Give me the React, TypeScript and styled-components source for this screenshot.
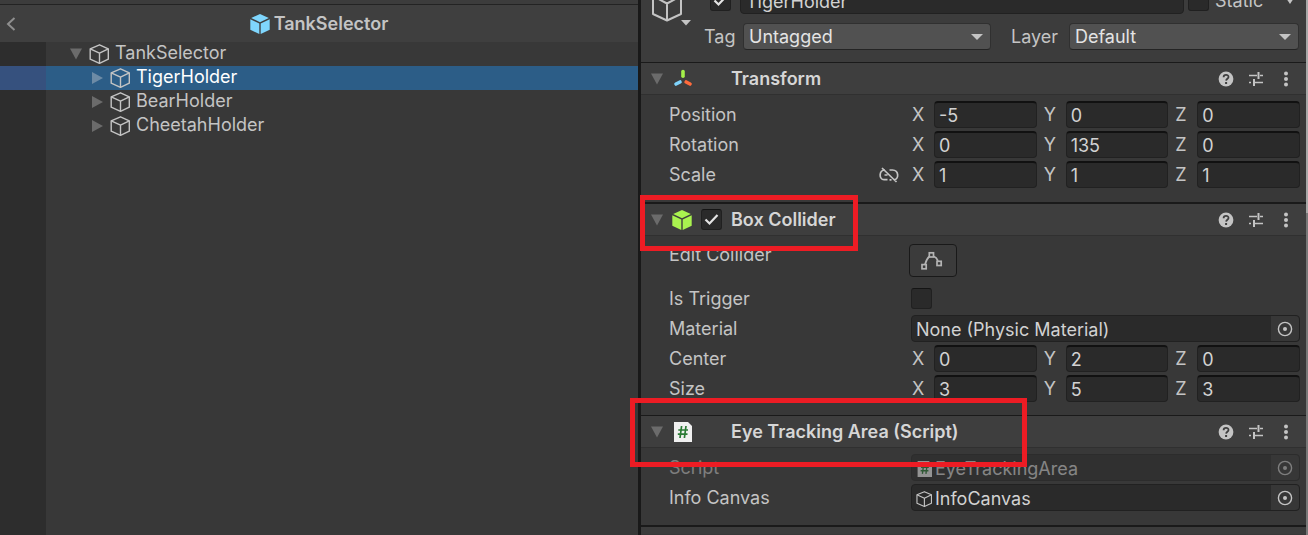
import React, { useState } from 'react';
import styled, { createGlobalStyle } from 'styled-components';

const GlobalStyle = createGlobalStyle`
  *, *::before, *::after { box-sizing: border-box; }
  html { background: #383838; }
  body {
    margin: 0;
    overflow: hidden;
    background: #383838;
    color: #c4c4c4;
    font-family: Inter, "Liberation Sans", sans-serif;
    font-size: 18px;
    line-height: 24px;
  }
  input, select, button { font: inherit; color: inherit; }
  ul { list-style: none; margin: 0; padding: 0; }
  h1, h2 { margin: 0; font-size: 18px; line-height: 24px; font-weight: 600; }
  svg { display: block; flex: none; }
`;

const Editor = styled.div`
  display: grid;
  grid-template-columns: minmax(0, 638fr) minmax(0, 668fr) 2px;
  min-height: 100vh;
`;

const WindowEdge = styled.div`
  background: linear-gradient(to bottom, #a8a8a8 213px, #787878 213px);
`;

/* Hierarchy */

const Hierarchy = styled.nav`
  display: flex;
  flex-direction: column;
  border-top: 4px solid #3c3c3c;
`;

const PrefabBar = styled.header`
  display: grid;
  grid-template-columns: 46px 1fr 46px;
  align-items: center;
  height: 38px;
  border-top: 1px solid #232323;
  background: #3f3f3f;
`;

const PlainButton = styled.button`
  display: flex;
  align-items: center;
  justify-content: center;
  padding: 0;
  border: 0;
  background: none;
`;

const BackButton = styled(PlainButton)`
  width: 22px;
  height: 24px;
`;

const PrefabTitle = styled.h1`
  display: flex;
  align-items: center;
  justify-content: center;
  gap: 4px;
`;

const TreeArea = styled.div`
  flex: 1;
  background: linear-gradient(to right, #2d2d2d 46px, #383838 46px);
`;

const TreeRow = styled.button<{ $depth: number; $selected?: boolean }>`
  display: flex;
  align-items: center;
  width: 100%;
  height: 24px;
  padding: 0 0 0 ${p => 70 + p.$depth * 21}px;
  border: 0;
  text-align: left;
  color: ${p => (p.$selected ? '#ffffff' : '#c4c4c4')};
  background: ${p => (p.$selected ? 'linear-gradient(to right, #36517e 46px, #2c5d87 46px)' : 'none')};
`;

const TreeCube = styled.span`
  padding: 0 6px 0 7px;
`;

const TreeLabel = styled.span`
  padding-bottom: 2px;
`;

/* Inspector */

const Inspector = styled.main`
  border-left: 3px solid #191919;
  background: #383838;
`;

const ObjectHeader = styled.header`
  display: grid;
  grid-template-columns: 50px 1fr;
  column-gap: 9px;
  height: 75px;
  margin-top: -13px;
  padding: 0 7px 0 10px;
  background: #3c3c3c;
`;

const ObjectIcon = styled(PlainButton)`
  align-items: flex-end;
  justify-content: flex-start;
  height: 39px;
`;

const ObjectRows = styled.div`
  display: flex;
  flex-direction: column;
  gap: 9px;
`;

const ObjectRow = styled.div`
  display: flex;
  align-items: center;
  height: 27px;
`;

const NameInput = styled.input`
  flex: 1;
  min-width: 0;
  height: 27px;
  margin: 0 4px 0 9px;
  padding: 2px 5px 0;
  border: 1px solid #212121;
  border-radius: 4px;
  background: #2a2a2a;
  color: #d2d2d2;
`;

const StaticLabel = styled.label`
  flex: 1;
  padding-left: 6px;
`;

const StaticGroup = styled.div`
  display: flex;
  align-items: center;
  width: 111px;
`;

const CaretSlot = styled(PlainButton)`
  width: 24px;
  height: 24px;
  padding: 0 0 0 5px;
`;

const SelectLabel = styled.label<{ $width: number }>`
  flex: none;
  width: ${p => p.$width}px;
`;

const LayerLabel = styled(SelectLabel)`
  margin-left: 20px;
`;

const TagLabel = styled(SelectLabel)`
  margin-left: -6px;
`;

const SelectBox = styled.div<{ $grow: number }>`
  display: grid;
  flex: ${p => p.$grow} 1 0;
  min-width: 0;
  align-items: center;

  > * { grid-area: 1 / 1; }
  > svg { justify-self: end; margin-right: 8px; pointer-events: none; }
`;

const SelectField = styled.select`
  appearance: none;
  width: 100%;
  height: 27px;
  padding: 0 24px 0 5px;
  border: 1px solid #303030;
  border-bottom-color: #242424;
  border-radius: 4px;
  background: #515151;
  color: #e4e4e4;
`;

const Component = styled.section<{ $line: number }>`
  position: relative;
  border-top: ${p => p.$line}px solid #1a1a1a;
`;

const ComponentBar = styled.header`
  display: grid;
  grid-template-columns: 31px 29px 30px 1fr auto;
  align-items: center;
  height: 32px;
  padding-right: 10px;
  border-bottom: 1px solid #303030;
  background: #3e3e3e;
`;

const ComponentTitle = styled.h2`
  color: #d6d6d6;
  white-space: nowrap;
`;

const BarActions = styled.div`
  display: flex;
  gap: 10px;
`;

const ActionButton = styled(PlainButton)`
  width: 20px;
  height: 20px;
`;

const Fields = styled.div<{ $bottom: number }>`
  display: flex;
  flex-direction: column;
  gap: 3px;
  padding: 6px 6px ${p => p.$bottom}px 28px;
`;

const Field = styled.div<{ $disabled?: boolean }>`
  display: grid;
  grid-template-columns: 242px minmax(0, 1fr);
  align-items: center;
  min-height: 27px;
  opacity: ${p => (p.$disabled ? 0.5 : 1)};
`;

const ButtonField = styled(Field)`
  align-items: start;
  padding: 1px 0 5px;
`;

const FieldLabel = styled.label`
  display: flex;
  align-items: center;
  justify-content: space-between;
  padding-right: 12px;
`;

const Vector = styled.div`
  display: grid;
  grid-template-columns: repeat(3, minmax(0, 1fr));
  gap: 6px;
`;

const Axis = styled.label`
  display: grid;
  grid-template-columns: 22px minmax(0, 1fr);
  align-items: center;
  padding-left: 1px;
`;

const NumberInput = styled.input`
  width: 100%;
  height: 27px;
  padding: 0 4px;
  border: 1px solid #212121;
  border-top: 2px solid #111111;
  border-radius: 4px;
  background: #2a2a2a;
  color: #d2d2d2;
`;

const ObjectField = styled.div`
  display: grid;
  grid-template-columns: auto minmax(0, 1fr) 28px;
  align-items: center;
  height: 27px;
  padding-left: 4px;
  border: 1px solid #212121;
  border-radius: 4px;
  background: #2a2a2a;
`;

const ObjectFieldIcon = styled.span`
  padding: 2px 3px 0 0;
`;

const ObjectInput = styled.input`
  grid-column: 2;
  min-width: 0;
  height: 25px;
  padding: 2px 0 0;
  border: 0;
  background: none;
  color: #d2d2d2;
`;

const PickerButton = styled(PlainButton)`
  align-self: stretch;
  border-radius: 0 4px 4px 0;
  background: #373737;
`;

const EditButton = styled.button`
  display: flex;
  align-items: center;
  justify-content: center;
  width: 48px;
  height: 33px;
  margin: 1px 0 0 -2px;
  padding: 0;
  border: 1px solid #191919;
  border-radius: 4px;
  background: #3b3b3b;
`;

const CheckWrap = styled.span`
  display: grid;
  flex: none;
  width: 21px;
  height: 21px;
  place-items: center;

  > * { grid-area: 1 / 1; }
  > svg { pointer-events: none; }
`;

const CheckInput = styled.input`
  appearance: none;
  width: 21px;
  height: 21px;
  margin: 0;
  border: 1px solid #202020;
  border-top-color: #141414;
  border-radius: 3px;
  background: #2a2a2a;
`;

const Footer = styled.footer`
  height: 9px;
  border-top: 2px solid #1a1a1a;
  background: #3c3c3c;
`;

/* Red callout frame drawn over a component's title bar */
const Callout = styled.div<{ $top: number; $left: number; $width: number; $height: number }>`
  position: absolute;
  z-index: 2;
  top: ${p => p.$top}px;
  left: ${p => p.$left}px;
  width: ${p => p.$width}px;
  height: ${p => p.$height}px;
  border: 5px solid #ed1c24;
  pointer-events: none;
`;

/* Icons */

const CubeOutline = ({ size = 20 }: { size?: number }) => (
  <svg width={size} height={size} viewBox="0 0 20 20" fill="none" stroke="#c4c4c4" strokeWidth="1.4" strokeLinejoin="round">
    <path d="M10.500 .8 19.300 4.800V15.200L10.500 19.300 1.200 15.200V4.800Z" />
    <path d="M1.200 4.800 10.500 9.200 19.300 4.800M10.500 9.200V19.300" />
  </svg>
);

const CubeSolid = ({ color }: { color: string }) => (
  <svg width="20" height="20" viewBox="0 0 20 20" fill={color}>
    <path d="M10 0 18.8 4 10 8.2 1.2 4Z" />
    <path d="M.3 5.3 9.3 9.6V20L.3 15.8Z" />
    <path d="M19.7 5.3 10.7 9.6V20L19.7 15.8Z" />
  </svg>
);

const Foldout = ({ open, color = '#6b6b6b' }: { open?: boolean; color?: string }) => (
  <svg width="12" height="12" viewBox="0 0 12 12" fill={color}>
    {open ? <path d="M0 .5H12L6 11.5Z" /> : <path d="M1 0 12 6 1 12Z" />}
  </svg>
);

const Caret = ({ width = 12 }: { width?: number }) => (
  <svg width={width} height="6" viewBox="0 0 12 6" preserveAspectRatio="none" fill="#c4c4c4">
    <path d="M0 0H12L6 6Z" />
  </svg>
);

const TransformIcon = () => (
  <svg width="20" height="20" viewBox="0 0 20 20" strokeLinecap="round" strokeWidth="3.6">
    <path d="M11 2.500V7.300" stroke="#a4f04a" />
    <path d="M8 13 4 15" stroke="#7fd3fb" />
    <path d="M14.200 13 18 15" stroke="#ff6b3d" />
  </svg>
);

const ScriptIcon = ({ size = 20 }: { size?: number }) => (
  <svg width={size} height={size} viewBox="0 0 20 20">
    <path d="M2 0H16L20 4V20H2Z" fill="#f0f0f0" />
    <path d="M9.600 4 8 16M14 4 12.400 16M6.300 8H16M5.800 12.200H15.500" stroke="#2a7a34" strokeWidth="1.700" fill="none" />
  </svg>
);

const HelpIcon = () => (
  <svg width="16" height="16" viewBox="0 0 16 16">
    <circle cx="8" cy="8" r="7.400" fill="#c4c4c4" />
    <path d="M5.600 6.200C5.600 3.100 10.600 3.200 10.500 6 10.500 7.700 8.200 7.800 8.100 9.600" fill="none" stroke="#3e3e3e" strokeWidth="1.800" />
    <rect x="7.100" y="11" width="2" height="2" fill="#3e3e3e" />
  </svg>
);

const PresetIcon = () => (
  <svg width="16" height="16" viewBox="0 0 16 16" fill="none" stroke="#c4c4c4">
    <path d="M1 4.500H9M12 4.500H15M1 11.500H3M6 11.500H15" strokeWidth="1.300" />
    <path d="M10.500 1V8M6 8V15" strokeWidth="2" />
  </svg>
);

const MenuIcon = () => (
  <svg width="16" height="16" viewBox="0 0 16 16" fill="#c4c4c4">
    <circle cx="8" cy="2.500" r="2" />
    <circle cx="8" cy="8" r="2" />
    <circle cx="8" cy="13.500" r="2" />
  </svg>
);

const PickerIcon = () => (
  <svg width="16" height="16" viewBox="0 0 16 16">
    <circle cx="8" cy="8" r="6.600" fill="none" stroke="#c4c4c4" strokeWidth="1.400" />
    <circle cx="8" cy="8" r="2" fill="#c4c4c4" />
  </svg>
);

const UnlinkIcon = () => (
  <svg width="20" height="16" viewBox="0 0 20 16" fill="none" stroke="#c4c4c4" strokeWidth="1.700">
    <path d="M6 3C-.3 3.200-.3 12.500 5 12.700H8.500M10.500 3H13.500C20 3.200 20 12 15.500 12.600M5.500 8H8.500M3 1 17.500 15M10.500 12.800H12.500" />
  </svg>
);

const EditIcon = () => (
  <svg width="24" height="20" viewBox="0 0 24 20" fill="none" stroke="#b4b4b4" strokeWidth="1.700">
    <path d="M4 13.500C4.800 10.500 6 7.500 8.300 5.500M12.500 5.300C14.500 6 16 7.500 17 9.800" />
    <rect x="8.300" y="1.800" width="4.200" height="4.200" />
    <rect x="1" y="13.600" width="4.200" height="4.200" />
    <rect x="16" y="10.300" width="4.200" height="4.200" />
  </svg>
);

/* Parts */

const Check = ({ id, label, initial = false }: { id?: string; label?: string; initial?: boolean }) => {
  const [on, setOn] = useState(initial);
  return (
    <CheckWrap>
      <CheckInput id={id} type="checkbox" aria-label={label} checked={on} onChange={e => setOn(e.target.checked)} />
      {on && (
        <svg width="15" height="13" viewBox="0 0 15 13" fill="none" stroke="#e4e4e4" strokeWidth="2.200">
          <path d="M1.500 6.500 5.500 10.500 13.500 2" />
        </svg>
      )}
    </CheckWrap>
  );
};

const VectorField = ({ name, values, icon }: { name: string; values: string[]; icon?: React.ReactNode }) => (
  <Field role="group" aria-label={name}>
    <FieldLabel as="span">{name}{icon}</FieldLabel>
    <Vector>
      {['X', 'Y', 'Z'].map((axis, i) => (
        <Axis key={axis}>
          {axis}
          <NumberInput defaultValue={values[i]} />
        </Axis>
      ))}
    </Vector>
  </Field>
);

const ReferenceField = (p: { id: string; name: string; value: string; icon?: React.ReactNode; disabled?: boolean }) => (
  <Field $disabled={p.disabled}>
    <FieldLabel htmlFor={p.id}>{p.name}</FieldLabel>
    <ObjectField>
      {p.icon && <ObjectFieldIcon>{p.icon}</ObjectFieldIcon>}
      <ObjectInput id={p.id} readOnly disabled={p.disabled} value={p.value} />
      <PickerButton aria-label={`Select ${p.name}`} disabled={p.disabled}><PickerIcon /></PickerButton>
    </ObjectField>
  </Field>
);

const Bar = ({ title, icon, toggle }: { title: string; icon: React.ReactNode; toggle?: boolean }) => (
  <ComponentBar>
    <PlainButton aria-label={`Fold ${title}`}><Foldout open /></PlainButton>
    <span>{icon}</span>
    <span>{toggle && <Check label={`Enable ${title}`} initial />}</span>
    <ComponentTitle>{title}</ComponentTitle>
    <BarActions>
      <ActionButton aria-label="Help"><HelpIcon /></ActionButton>
      <ActionButton aria-label="Presets"><PresetIcon /></ActionButton>
      <ActionButton aria-label="More"><MenuIcon /></ActionButton>
    </BarActions>
  </ComponentBar>
);

const tree = [
  { name: 'TankSelector', depth: 0 },
  { name: 'TigerHolder', depth: 1 },
  { name: 'BearHolder', depth: 1 },
  { name: 'CheetahHolder', depth: 1 },
];

export default function App() {
  const [selected, setSelected] = useState('TigerHolder');
  return (
    <>
      <GlobalStyle />
      <Editor>
        <Hierarchy>
          <PrefabBar>
            <BackButton aria-label="Back">
              <svg width="10" height="14" viewBox="0 0 10 14" fill="none" stroke="#8f8f8f" strokeWidth="2">
                <path d="M8.500 1 2 7 8.500 13" />
              </svg>
            </BackButton>
            <PrefabTitle><CubeSolid color="#7fd6fd" />TankSelector</PrefabTitle>
          </PrefabBar>
          <TreeArea>
            <ul>
              {tree.map(({ name, depth }) => (
                <li key={name}>
                  <TreeRow $depth={depth} $selected={name === selected} onClick={() => setSelected(name)}>
                    <Foldout open={depth === 0} color={name === selected ? '#6d8ba6' : '#6b6b6b'} />
                    <TreeCube><CubeOutline /></TreeCube>
                    <TreeLabel>{name}</TreeLabel>
                  </TreeRow>
                </li>
              ))}
            </ul>
          </TreeArea>
        </Hierarchy>

        <Inspector>
          <ObjectHeader>
            <ObjectIcon aria-label="Choose icon">
              <svg width="42" height="38" viewBox="0 0 42 38" fill="none" stroke="#c4c4c4" strokeWidth="2" strokeLinejoin="round">
                <path d="M16 2 30 8V26L16 32.500 2 26V8ZM2 8 16 15.500 30 8M16 15.500V32.500" />
                <path d="M30 32H40L35 37.500Z" fill="#c4c4c4" stroke="none" />
              </svg>
            </ObjectIcon>
            <ObjectRows>
              <ObjectRow>
                <Check label="Active" initial />
                <NameInput aria-label="Name" defaultValue="TigerHolder" />
                <StaticGroup>
                  <Check id="static" />
                  <StaticLabel htmlFor="static">Static</StaticLabel>
                  <CaretSlot aria-label="Static flags"><Caret width={8} /></CaretSlot>
                </StaticGroup>
              </ObjectRow>
              <ObjectRow>
                <TagLabel htmlFor="tag" $width={39}>Tag</TagLabel>
                <SelectBox $grow={248}>
                  <SelectField id="tag"><option>Untagged</option></SelectField>
                  <Caret />
                </SelectBox>
                <LayerLabel htmlFor="layer" $width={58}>Layer</LayerLabel>
                <SelectBox $grow={230}>
                  <SelectField id="layer"><option>Default</option></SelectField>
                  <Caret />
                </SelectBox>
              </ObjectRow>
            </ObjectRows>
          </ObjectHeader>

          <Component $line={1}>
            <Bar title="Transform" icon={<TransformIcon />} />
            <Fields $bottom={14}>
              <VectorField name="Position" values={['-5', '0', '0']} />
              <VectorField name="Rotation" values={['0', '135', '0']} />
              <VectorField name="Scale" values={['1', '1', '1']} icon={<UnlinkIcon />} />
            </Fields>
          </Component>

          <Component $line={2}>
            <Bar title="Box Collider" icon={<CubeSolid color="#a9f34f" />} toggle />
            <Fields $bottom={13}>
              <ButtonField>
                <FieldLabel htmlFor="edit-collider">Edit Collider</FieldLabel>
                <EditButton id="edit-collider" aria-label="Edit Collider"><EditIcon /></EditButton>
              </ButtonField>
              <Field>
                <FieldLabel htmlFor="is-trigger">Is Trigger</FieldLabel>
                <Check id="is-trigger" />
              </Field>
              <ReferenceField id="material" name="Material" value="None (Physic Material)" />
              <VectorField name="Center" values={['0', '2', '0']} />
              <VectorField name="Size" values={['3', '5', '3']} />
            </Fields>
            <Callout $top={-9} $left={-1} $width={218} $height={56} />
          </Component>

          <Component $line={1}>
            <Bar title="Eye Tracking Area (Script)" icon={<ScriptIcon />} />
            <Fields $bottom={14}>
              <ReferenceField id="script" name="Script" value="EyeTrackingArea" icon={<ScriptIcon size={16} />} disabled />
              <ReferenceField id="info-canvas" name="Info Canvas" value="InfoCanvas" icon={<CubeOutline size={16} />} />
            </Fields>
            <Callout $top={-18} $left={-11} $width={397} $height={69} />
          </Component>
          <Footer />
        </Inspector>
        <WindowEdge />
      </Editor>
    </>
  );
}
